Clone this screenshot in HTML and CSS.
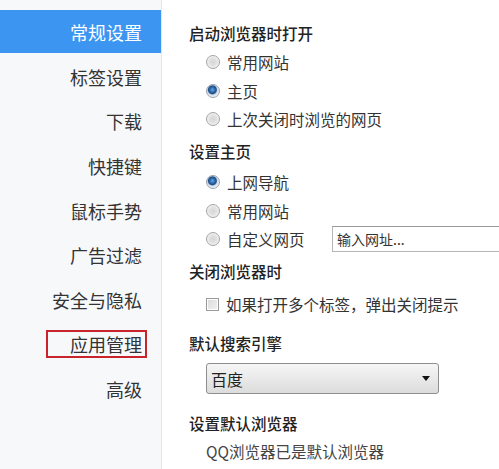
FILE: index.html
```html
<!DOCTYPE html>
<html lang="zh">
<head>
<meta charset="utf-8">
<link rel="stylesheet" href="styles.css">
</head>
<body>
<div class="page">
  <nav class="sidebar">
    <div class="nav-item active"><span class="label">常规设置</span></div>
    <div class="nav-item"><span class="label">标签设置</span></div>
    <div class="nav-item"><span class="label">下载</span></div>
    <div class="nav-item"><span class="label">快捷键</span></div>
    <div class="nav-item"><span class="label">鼠标手势</span></div>
    <div class="nav-item"><span class="label">广告过滤</span></div>
    <div class="nav-item"><span class="label">安全与隐私</span></div>
    <div class="nav-item"><span class="label marked">应用管理</span></div>
    <div class="nav-item"><span class="label">高级</span></div>
  </nav>
  <main class="content">
    <section class="sec s1">
      <div class="heading">启动浏览器时打开</div>
      <div class="opts">
        <div class="opt"><span class="radio"></span>常用网站</div>
        <div class="opt"><span class="radio checked"></span>主页</div>
        <div class="opt"><span class="radio"></span>上次关闭时浏览的网页</div>
      </div>
    </section>
    <section class="sec s2">
      <div class="heading">设置主页</div>
      <div class="opts">
        <div class="opt"><span class="radio checked"></span>上网导航</div>
        <div class="opt"><span class="radio"></span>常用网站</div>
        <div class="opt"><span class="radio"></span><span class="opt-text">自定义网页</span><span class="url-input">输入网址...</span></div>
      </div>
    </section>
    <section class="sec s3">
      <div class="heading">关闭浏览器时</div>
      <div class="opts">
        <div class="opt"><span class="checkbox"></span>如果打开多个标签，弹出关闭提示</div>
      </div>
    </section>
    <section class="sec s4">
      <div class="heading">默认搜索引擎</div>
      <div class="select"><span class="select-text">百度</span><span class="arrow"></span></div>
    </section>
    <section class="sec s5">
      <div class="heading">设置默认浏览器</div>
      <div class="info">QQ浏览器已是默认浏览器</div>
    </section>
  </main>
</div>
</body>
</html>
```
FILE: styles.css
```css
html, body {
  margin: 0;
  padding: 0;
  background: #ffffff;
}
body {
  font-family: "Noto Sans CJK SC", "Noto Sans", sans-serif;
  color: #333;
  width: 499px;
  height: 469px;
  overflow: hidden;
}
.page {
  display: flex;
  height: 469px;
}
.sidebar {
  width: 162px;
  flex: none;
  background: #f7f8fa;
  border-right: 1px solid #e4e5e7;
  padding-top: 10px;
  box-sizing: border-box;
}
.nav-item {
  height: 44.6px;
  display: flex;
  align-items: center;
  justify-content: flex-end;
  padding-right: 19px;
  font-size: 18px;
  color: #333;
}
.nav-item.active {
  background: #3d95f2;
  color: #fff;
  height: 43px;
  margin-bottom: 1.6px;
}
.label {
  line-height: 24px;
}
.label.marked {
  border: 2px solid #c9232b;
  padding: 0 3px 0 22px;
  margin-right: -5px;
}
.content {
  flex: 1;
  padding: 19px 0 0 27px;
  min-width: 0;
}
.heading {
  height: 28px;
  line-height: 28px;
  font-size: 15.5px;
  font-weight: 500;
  color: #222;
}
.opt {
  height: 28.5px;
  display: flex;
  align-items: center;
  padding-left: 17px;
  font-size: 15.5px;
  color: #333;
  white-space: nowrap;
}
.s1 .opts { margin-top: 1px; }
.s2 { margin-top: 3.5px; }
.s2 .opts { margin-top: 2.75px; }
.s3 { margin-top: 3.75px; }
.s3 .opts { margin-top: 4.75px; }
.s4 { margin-top: 10.75px; }
.s5 { margin-top: 15px; }
.radio {
  width: 14px;
  height: 14px;
  border-radius: 50%;
  box-sizing: border-box;
  border: 1px solid #a4a4a4;
  background: radial-gradient(circle at 50% 50%, #d6d6d6 0%, #e2e2e2 45%, #f4f4f4 75%, #e0e0e0 100%);
  margin-right: 7px;
  flex: none;
}
.radio.checked {
  border-color: #9aa3ad;
  background: radial-gradient(circle at 45% 40%, #6fa6dc 0%, #2a6bb0 25%, #1d4f86 40%, #cfdbe8 52%, #f2f4f6 75%, #dfe3e7 100%);
}
.checkbox {
  width: 13px;
  height: 13px;
  box-sizing: border-box;
  border: 1px solid #9a9a9a;
  background: linear-gradient(135deg, #d9d9d9 0%, #f3f3f3 100%);
  box-shadow: inset 0 0 0 1px #fdfdfd;
  margin-right: 7px;
  flex: none;
}
.opt-text {
  width: 105px;
  flex: none;
}
.url-input {
  flex: none;
  width: 180px;
  height: 26px;
  box-sizing: border-box;
  border: 1px solid #b5b5b5;
  border-top-color: #9a9a9a;
  padding-left: 4px;
  line-height: 24px;
  font-size: 14px;
  color: #333;
  background: #fff;
}
.select {
  margin: 6px 0 0 17px;
  width: 233px;
  height: 31px;
  box-sizing: border-box;
  border: 1px solid #8e8e8e;
  border-radius: 3px;
  background: linear-gradient(#f6f6f6, #e9e9e9 50%, #dcdcdc);
  display: flex;
  align-items: center;
  justify-content: space-between;
  padding: 0 8px 0 4px;
  font-size: 16px;
  color: #222;
}
.arrow {
  width: 0;
  height: 0;
  border-left: 4px solid transparent;
  border-right: 4px solid transparent;
  border-top: 5px solid #111;
}
.info {
  height: 28px;
  line-height: 28px;
  padding-left: 17px;
  font-size: 15.5px;
  color: #444;
}
```
